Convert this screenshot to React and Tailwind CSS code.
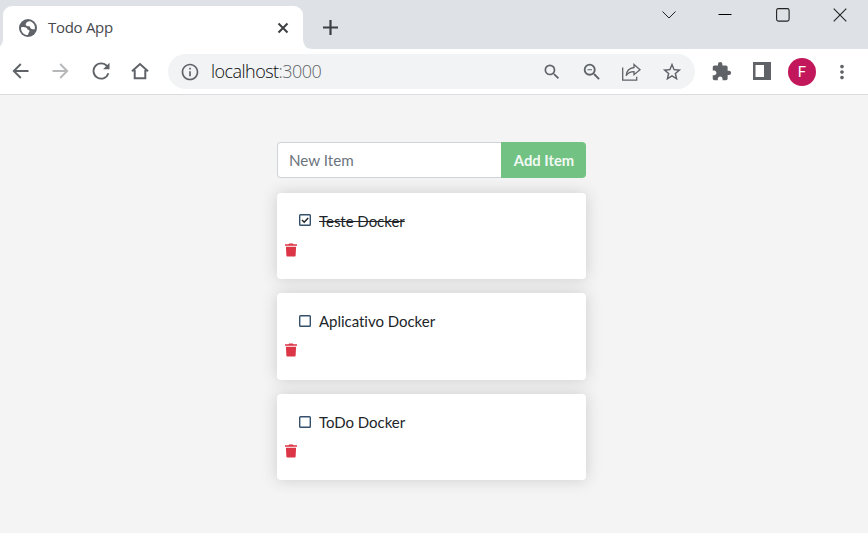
import React from 'react';
import {
  MdOutlineInfo, MdSearch, MdZoomOut, MdStarBorder, MdExtension, MdMoreVert,
} from 'react-icons/md';

const items = [
  { name: 'Teste Docker', done: true, height: 'h-[86px]', lift: '-mt-[3px]' },
  { name: 'Aplicativo Docker', done: false, height: 'h-[87px]', lift: '-mt-[1px]' },
  { name: 'ToDo Docker', done: false, height: 'h-[86px]', lift: '-mt-[1px]' },
];

function Globe() {
  return (
    <svg className="h-[18px] w-[18px]" viewBox="0 0 18 18">
      <circle cx="9" cy="9" r="9" fill="#5f6368" />
      <path fill="#fff" d="M2 8.400C5 7.600 7.600 8.200 8.600 10.400c2 .2 2.600 1.800 1.200 3.100L8.800 16C5 16 2 13 2 8.400ZM11 2.300C8.200 2.400 6.800 4 6.600 5.800c.9 1.300 2.400 1.600 4 1.400.7 2.400 2.200 3.300 5.200 3.100C16.500 6.500 14.500 3.500 11 2.300Z" />
    </svg>
  );
}

function TabStrip() {
  return (
    <div className="flex h-[49px] bg-[#dee1e6]">
      <div className="flex w-[3px] items-end">
        <svg className="h-[9px] w-[3px]" viewBox="0 0 3 9"><path d="M3 0v9H0V6.500Q2.500 4 3 0Z" fill="#fff" /></svg>
      </div>
      <div className="mt-[6px] flex h-[43px] w-[300px] items-center rounded-t-[9px] bg-white pl-4 pr-[14px]">
        <Globe />
        <span className="-mt-[1px] ml-[11px] whitespace-nowrap font-['Open_Sans',sans-serif] text-[15px] leading-5 tracking-[-0.3px] text-[#45484c]">Todo App</span>
        <svg className="ml-auto h-3 w-3" viewBox="0 0 12 12"><path d="m1.500 1.500 9 9m0-9-9 9" stroke="#3c4043" strokeWidth="2" /></svg>
      </div>
      <div className="flex items-end">
        <svg className="h-[10px] w-[10px]" viewBox="0 0 10 10"><path d="M0 0Q0 10 10 10H0Z" fill="#fff" /></svg>
      </div>
      <svg className="ml-[9px] mt-[19px] h-4 w-4" viewBox="0 0 16 16"><path d="M8.500 1v15M1 8.500h15" stroke="#3c4043" strokeWidth="2.200" /></svg>
      <div className="ml-auto flex pr-[21px] pt-2">
        <svg className="mr-[42px] h-[14px] w-[14px]" viewBox="0 0 14 14"><path d="m.5 3.500 6.500 6.500 6.500-6.500" fill="none" stroke="#222" /></svg>
        <svg className="mr-[44px] h-[14px] w-[14px]" viewBox="0 0 14 14"><path d="M.5 6.500h13" stroke="#000" /></svg>
        <svg className="mr-[43px] h-[14px] w-[14px]" viewBox="0 0 14 14"><rect x=".6" y=".6" width="12.500" height="12.500" rx="1.800" fill="none" stroke="#222" strokeWidth="1.100" /></svg>
        <svg className="h-[14px] w-[14px]" viewBox="0 0 14 14"><path d="m.7.7 12.600 12.600m0-12.600L.7 13.300" stroke="#222" strokeWidth="1.100" /></svg>
      </div>
    </div>
  );
}

function Toolbar() {
  return (
    <div className="flex h-[46px] items-center border-b border-[#dadce0] bg-white text-[#5f6368]">
      <svg className="-mt-[2px] ml-3 h-4 w-[17px]" viewBox="0 0 17 16" fill="none" stroke="#5f6368" strokeWidth="1.900"><path d="M16.500 8H2M8.800 1 1.800 8l7 7" /></svg>
      <svg className="-mt-[2px] ml-[23px] h-4 w-[17px]" viewBox="0 0 17 16" fill="none" stroke="#b6b8ba" strokeWidth="1.900"><path d="M.5 8H15M8.200 1l7 7-7 7" /></svg>
      <svg className="-mt-[1px] ml-[23px] h-[18px] w-[18px]" viewBox="0 0 18 18"><path d="M15 4.200A7.600 7.600 0 1 0 16.400 11.200" fill="none" stroke="#5f6368" strokeWidth="1.900" /><path d="M17.500.8v6.400h-6.400Z" fill="#5f6368" /></svg>
      <svg className="-mt-[1px] ml-[21px] h-[18px] w-[18px]" viewBox="0 0 18 18" fill="none" stroke="#5f6368" strokeWidth="2"><path d="M1 9.300 9 2l8 7.300M3.700 8v8.300h10.600V8" /></svg>
      <div className="ml-[19px] flex h-[35px] w-[527px] items-center rounded-full bg-[#f1f3f4] pl-3">
        <MdOutlineInfo className="h-5 w-5" />
        <span className="-mt-[2px] ml-[11px] whitespace-nowrap font-['Open_Sans',sans-serif] text-[18px] font-light leading-6 tracking-[-0.54px] text-[#5f6368]"><span className="text-[#08080a]">localhost</span>:3000</span>
        <div className="ml-auto flex items-center pr-3">
          <MdSearch className="mr-[19px] h-5 w-5" />
          <MdZoomOut className="mr-[19px] h-[22px] w-[22px]" />
          <svg className="mr-[20px] h-[18px] w-[19px]" viewBox="0 0 19 18" fill="none" stroke="#5f6368" strokeWidth="1.300"><path d="M.7 4.500v12.700h14v-3.500M12 1.500l6 5.200-6 5v-3c-4 0-6 1-7.800 4C4.500 8 7.500 5 12 4.500Z" /></svg>
          <MdStarBorder className="h-[22px] w-[22px]" />
        </div>
      </div>
      <MdExtension className="ml-4 h-[21px] w-[21px]" />
      <svg className="-mt-[1px] ml-[21px] h-[18px] w-[18px]" viewBox="0 0 18 18"><path fillRule="evenodd" fill="#5f6368" d="M0 0h18v18H0ZM2.500 3v12H11V3Z" /></svg>
      <span className="ml-[17px] mt-[1px] flex h-7 w-7 items-center justify-center rounded-full bg-[#c2185b] pt-[1px] font-[Roboto,sans-serif] text-[15px] text-white">F</span>
      <MdMoreVert className="ml-[15px] h-[22px] w-[22px]" />
    </div>
  );
}

function Checkbox({ checked }) {
  return (
    <svg className="h-3 w-3" viewBox="0 0 12 12" fill="none">
      <rect x=".7" y=".7" width="10.600" height="10.600" rx=".8" stroke="#35506b" strokeWidth="1.400" />
      {checked && <path d="m3 6 2.200 2.200L9.200 4" stroke="#212529" strokeWidth="1.500" />}
    </svg>
  );
}

function Trash() {
  return (
    <svg className="h-[14px] w-3" viewBox="0 0 12 14" fill="#dc3545">
      <path d="M0 1.200h3.500L4.200.4h3.600l.7.800H12v1.600H0ZM.9 3.700h10.200l-.5 8.700c0 .7-.5 1.100-1.200 1.100H2.600c-.7 0-1.200-.4-1.200-1.100Z" />
    </svg>
  );
}

export default function App() {
  return (
    <div className="flex h-[536px] w-[868px] flex-col overflow-hidden bg-white">
      <TabStrip />
      <Toolbar />
      <main className="h-[438px] bg-[#f4f4f4] pl-[277px] pt-[47px] font-[Lato,sans-serif] text-[15px] text-[#212529] [font-variant-ligatures:none]">
        <form className="mb-[15px] flex h-9 w-[309px]">
          <input
            className="w-[224px] min-w-0 rounded-l-[4px] border border-r-0 border-[#ced4da] bg-white px-[11px] text-[15.200px] outline-none placeholder:text-[#6c757d]"
            placeholder="New Item"
          />
          <button type="button" className="w-[85px] whitespace-nowrap rounded-r-[4px] bg-[#71c283] pl-[1px] text-[14.800px] font-bold text-[#f1f9f3]">Add Item</button>
        </form>
        <div className="flex w-[309px] flex-col gap-[14px]">
          {items.map((item) => (
            <div key={item.name} className={`${item.height} rounded-[4px] bg-white px-2 pt-[17px] shadow-[0_0_15px_#ccc]`}>
              <div className="flex h-[23px] items-center pl-[14px]">
                <div className={item.lift}><Checkbox checked={item.done} /></div>
                <span className={`ml-2 whitespace-nowrap tracking-[-0.03px] ${item.done ? 'line-through' : ''}`}>{item.name}</span>
              </div>
              <div className="mt-[10px]"><Trash /></div>
            </div>
          ))}
        </div>
      </main>
    </div>
  );
}
